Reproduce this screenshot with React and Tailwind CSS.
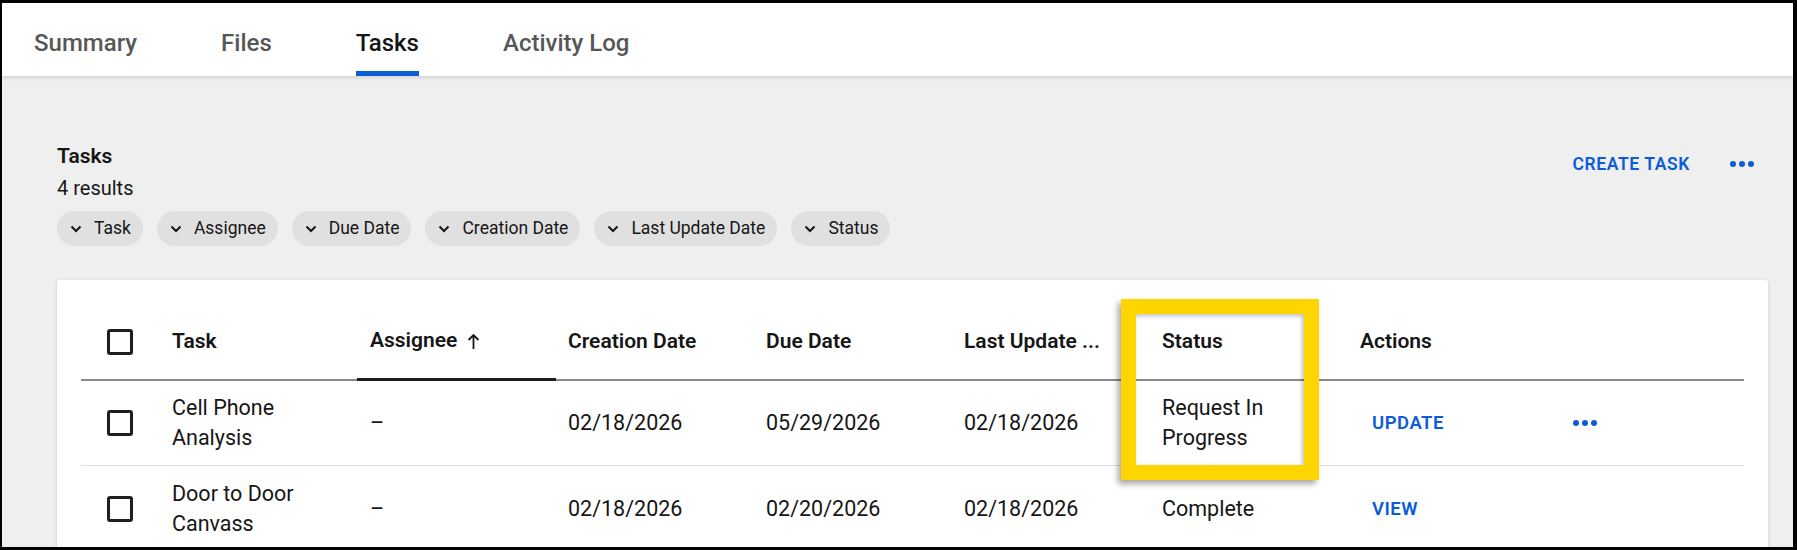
import React from 'react'

const font = { fontFamily: 'Roboto, "Noto Sans", Arial, sans-serif' }

const tabs = ['Summary', 'Files', 'Tasks', 'Activity Log']
const filters = ['Task', 'Assignee', 'Due Date', 'Creation Date', 'Last Update Date', 'Status']

const rows = [
    { task: ['Cell Phone', 'Analysis'], assignee: '–', created: '02/18/2026', due: '05/29/2026', updated: '02/18/2026', status: ['Request In', 'Progress'], action: 'UPDATE', more: true },
    { task: ['Door to Door', 'Canvass'], assignee: '–', created: '02/18/2026', due: '02/20/2026', updated: '02/18/2026', status: ['Complete'], action: 'VIEW', more: false },
]

const cols = 'grid grid-cols-[79px_197px_199px_198px_198px_198px_198px_198px_1fr]'

const Chevron = () => (
    <svg width="12" height="8" viewBox="0 0 12 8" fill="none">
        <path d="M1.5 1.5 L6 6 L10.5 1.5" stroke="#161616" strokeWidth="2" />
    </svg>
)

const Dots = () => (
    <div className="flex items-center gap-[3px]">
        <span className="w-[6px] h-[6px] rounded-full bg-[#0b5cd7]" />
        <span className="w-[6px] h-[6px] rounded-full bg-[#0b5cd7]" />
        <span className="w-[6px] h-[6px] rounded-full bg-[#0b5cd7]" />
    </div>
)

const Checkbox = () => (
    <div className="w-[26px] h-[26px] rounded-[3px] border-[3px] border-[#1f1f1f] bg-white" />
)

const App = () => {
    return (
        <div style={font} className="w-[1797px] h-[550px] overflow-hidden box-border border-black border-t-[3px] border-l-[2px] border-r-[4px] border-b-[3px] bg-[#efefef] text-[#161616]">
            {/* tabs */}
            <div className="relative z-10 h-[73px] bg-white shadow-[0_2px_4px_rgba(0,0,0,0.12)] flex pl-[32px] gap-[84px]">
                {tabs.map(t => (
                    <div
                        key={t}
                        className={
                            t === 'Tasks'
                                ? 'h-full pt-[11px] flex items-center border-b-[5px] border-[#0b5cd7] text-[24px] font-medium text-[#161616]'
                                : 'h-full pt-[11px] flex items-center border-b-[5px] border-transparent text-[24px] font-medium text-[#575757]'
                        }
                    >
                        {t}
                    </div>
                ))}
            </div>

            <div className="pl-[55px] pr-[25px]">
                {/* header */}
                <div className="pt-[65px] flex justify-between">
                    <div>
                        <div className="text-[21px] leading-[30px] font-semibold">Tasks</div>
                        <div className="mt-[2px] text-[20px] leading-[30px]">4 results</div>
                        <div className="mt-[8px] flex gap-[14px]">
                            {filters.map(f => (
                                <div key={f} className="h-[35px] rounded-full bg-[#e0e0e0] pl-[13px] pr-[12px] flex items-center gap-[12px] text-[17.5px]">
                                    <Chevron />
                                    <span>{f}</span>
                                </div>
                            ))}
                        </div>
                    </div>
                    <div className="h-[46px] flex items-center gap-[40px] mr-[14px]">
                        <span className="text-[17.5px] font-semibold tracking-[0.6px] text-[#0b5cd7]">CREATE TASK</span>
                        <Dots />
                    </div>
                </div>

                {/* card */}
                <div className="relative mt-[34px] bg-white rounded-[3px] shadow-[0_1px_4px_rgba(0,0,0,0.15)] pt-[24px] pb-[40px] px-[24px]">
                    <div className={`${cols} h-[77px] border-b-2 border-[#8a8a8a] text-[21px] font-semibold`}>
                        <div className="flex items-center pl-[26px]"><Checkbox /></div>
                        <div className="flex items-center pl-[12px]">Task</div>
                        <div className="flex items-center pl-[13px] gap-[10px] border-b-[3px] border-[#1f1f1f] -mb-[2px]">
                            Assignee
                            <svg width="13" height="17" viewBox="0 0 13 17" fill="none">
                                <path d="M6.5 16 V2 M1.5 7 L6.5 2 L11.5 7" stroke="#161616" strokeWidth="1.8" />
                            </svg>
                        </div>
                        <div className="flex items-center pl-[12px]">Creation Date</div>
                        <div className="flex items-center pl-[12px]">Due Date</div>
                        <div className="flex items-center pl-[12px]">Last Update ...</div>
                        <div className="flex items-center pl-[12px]">Status</div>
                        <div className="flex items-center pl-[12px]">Actions</div>
                        <div />
                    </div>

                    {rows.map((r, i) => (
                        <div key={i} className={`${cols} h-[85px] ${i === 0 ? 'border-b border-[#e0e0e0]' : ''} items-center text-[21.5px] leading-[30px]`}>
                            <div className="pl-[26px]"><Checkbox /></div>
                            <div className="pl-[12px]">{r.task.map(l => <div key={l}>{l}</div>)}</div>
                            <div className="pl-[13px]">{r.assignee}</div>
                            <div className="pl-[12px]">{r.created}</div>
                            <div className="pl-[12px]">{r.due}</div>
                            <div className="pl-[12px]">{r.updated}</div>
                            <div className="pl-[12px]">{r.status.map(l => <div key={l}>{l}</div>)}</div>
                            <div className="pl-[24px] text-[18.5px] font-semibold tracking-[0.5px] text-[#0b5cd7]">{r.action}</div>
                            <div className="pl-[27px]">{r.more && <Dots />}</div>
                        </div>
                    ))}

                    {/* highlight annotation */}
                    <div className="absolute left-[1064px] top-[19px] w-[198px] h-[181px] border-[15px] border-[#ffd500] shadow-[-3px_4px_6px_rgba(0,0,0,0.35),inset_-2px_2px_4px_rgba(0,0,0,0.25)] pointer-events-none" />
                </div>
            </div>
        </div>
    )
}

export default App
